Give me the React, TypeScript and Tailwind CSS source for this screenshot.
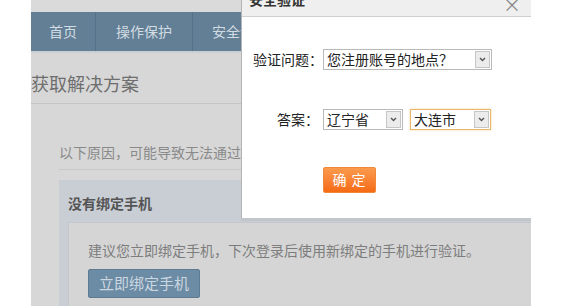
import React from "react";

const font = { fontFamily: '"Noto Sans CJK SC", "Liberation Sans", sans-serif' };

function Select({ value, width, focus }: { value: string; width: string; focus?: boolean }) {
  return (
    <div
      className={`flex h-[21px] items-stretch bg-white ${width} ${
        focus ? "border border-[#e8b86a] shadow-[0_0_2px_#f3d39a]" : "border border-[#b9b9b9]"
      }`}
    >
      <span className="flex-1 truncate pl-[3px] text-[14px] leading-[19px] text-[#222]">{value}</span>
      <span className="my-[1px] mr-[1px] flex w-[15px] items-center justify-center border border-[#c6c6c6] bg-[#ececec]">
        <svg width="7" height="5" viewBox="0 0 7 5">
          <path d="M1 1 L3.5 3.6 L6 1" fill="none" stroke="#555" strokeWidth="1.4" />
        </svg>
      </span>
    </div>
  );
}

function Dialog() {
  return (
    <div className="absolute left-[241px] top-0 flex h-[218px] w-[290px] flex-col border-l border-[#b4b4b4] bg-white shadow-[0_3px_0_#c2c6ca]">
      <div className="relative h-[17px] shrink-0 border-b border-[#cfcfcf] bg-[#efefef]">
        <span className="absolute left-[7px] top-[-11px] whitespace-nowrap text-[14px] font-bold text-[#333]">安全验证</span>
        <span className="absolute right-[10px] top-[-9px] text-[18px] text-[#888]">×</span>
      </div>
      <div className="flex shrink-0 items-center pt-[32px]">
        <span className="w-[81px] whitespace-nowrap text-right text-[14px] text-[#222]">验证问题：</span>
        <Select value="您注册账号的地点？" width="w-[169px]" />
      </div>
      <div className="flex shrink-0 items-center pt-[39px]">
        <span className="w-[81px] whitespace-nowrap pr-[4px] text-right text-[14px] text-[#222]">答案：</span>
        <Select value="辽宁省" width="w-[80px]" />
        <div className="w-[7px]" />
        <Select value="大连市" width="w-[81px]" focus />
      </div>
      <div className="shrink-0 pl-[81px] pt-[36px]">
        <button className="h-[26px] w-[53px] rounded-[2px] border border-[#f08a3a] bg-gradient-to-b from-[#fb9a4c] to-[#f56a10] pl-[4px] text-[14px] tracking-[5px] text-white">
          确定
        </button>
      </div>
    </div>
  );
}

export default function App() {
  return (
    <div className="relative flex h-[306px] w-[567px] overflow-hidden bg-white" style={font}>
      <div className="w-[31px] shrink-0 bg-white" />
      <div className="flex w-[500px] shrink-0 flex-col overflow-hidden bg-[#d7d7d7]">
        <div className="h-[12px] shrink-0 bg-[#dadada]" />
        <nav className="flex h-[39px] shrink-0 bg-[#627f95] text-[14px] text-[#d3dce3]">
          <div className="flex w-[65px] items-center justify-center border-r border-[#56728a]">首页</div>
          <div className="flex w-[97px] items-center justify-center border-r border-[#56728a]">操作保护</div>
          <div className="flex w-[94px] items-center justify-center">安全设置</div>
        </nav>
        <div className="h-[2px] shrink-0 bg-[#c9d0d5]" />
        <div className="h-[51px] shrink-0 border-b border-[#c5c5c5] pt-[17px] text-[18px] leading-[26px] text-[#6e6e6e]">
          获取解决方案
        </div>
        <div className="w-[560px] shrink-0 pl-[28px]">
          <div className="h-[66px] border-b border-[#c8c8c8] pt-[38px] text-[14px] leading-[20px] text-[#8a8a8a]">
            以下原因，可能导致无法通过安全验证
          </div>
          <div className="mt-[10px] bg-[#c9ced5] px-[9px] pb-[10px]">
            <div className="h-[42px] pt-[13px] text-[14px] font-bold leading-[20px] text-[#555]">没有绑定手机</div>
            <div className="border border-[#c4c8cc] bg-[#d5d5d5] px-[19px] pb-[12px] pt-[17px]">
              <div className="whitespace-nowrap text-[14px] leading-[20px] text-[#7d7d7d]">
                建议您立即绑定手机，下次登录后使用新绑定的手机进行验证。
              </div>
              <button className="mt-[9px] h-[29px] w-[112px] rounded-[2px] border border-[#5d7b93] bg-[#6c8ba4] text-[15px] text-[#cbd7e0]">
                立即绑定手机
              </button>
            </div>
          </div>
        </div>
      </div>
      <Dialog />
    </div>
  );
}
